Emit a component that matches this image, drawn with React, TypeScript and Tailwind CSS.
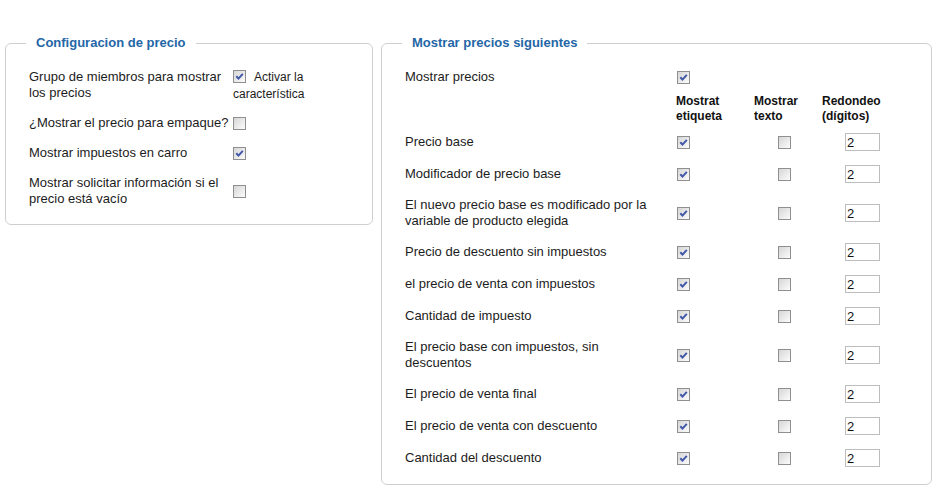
import React from "react";

const Box = ({ checked }: { checked?: boolean }) => (
  <span className="inline-flex w-[13px] h-[13px] shrink-0 items-center justify-center border border-[#8f8f8f] bg-linear-to-br from-[#d6d6d6] to-[#fcfcfc] align-top">
    {checked && (
      <svg width="11" height="11" viewBox="0 0 11 11">
        <path d="M2.3 5.2 L4.5 7.6 L8.8 2.8" fill="none" stroke="#4157a8" strokeWidth="2" />
      </svg>
    )}
  </span>
);

const Num = () => (
  <input
    readOnly
    value="2"
    className="w-[35px] h-[18px] border border-[#bdbdbd] bg-white pl-[1px] text-[13px] leading-[16px] text-[#111] outline-none"
  />
);

const leftRows: { label: string; checked: boolean; extra?: boolean }[] = [
  { label: "Grupo de miembros para mostrar los precios", checked: true, extra: true },
  { label: "¿Mostrar el precio para empaque?", checked: false },
  { label: "Mostrar impuestos en carro", checked: true },
  { label: "Mostrar solicitar información si el precio está vacío", checked: false },
];

const rightRows = [
  "Precio base",
  "Modificador de precio base",
  "El nuevo precio base es modificado por la variable de producto elegida",
  "Precio de descuento sin impuestos",
  "el precio de venta con impuestos",
  "Cantidad de impuesto",
  "El precio base con impuestos, sin descuentos",
  "El precio de venta final",
  "El precio de venta con descuento",
  "Cantidad del descuento",
];

export default function App() {
  return (
    <div className="w-[937px] h-[494px] bg-white font-['Liberation_Sans',Arial,sans-serif] text-[13px] leading-[16px] text-[#1c1c1c]">
      <div className="flex items-start gap-[8px] px-[5px] pt-[35px]">
        <fieldset className="w-[368px] rounded-[6px] border border-[#cfcfcf] p-0">
          <legend className="ml-[20px] px-[10px] text-[13px] font-bold leading-[16px] text-[#2466a6]">
            Configuracion de precio
          </legend>
          <div className="px-[23px] pt-[11px] pb-[10px]">
            {leftRows.map((r) =>
              r.extra ? (
                <div key={r.label} className="grid grid-cols-[204px_1fr] items-start py-[7px]">
                  <div className="pr-[4px]">{r.label}</div>
                  <div className="h-[32px] w-[80px] text-[12px] leading-[17px]">
                    <span className="mt-[1px] mr-[8px] inline-flex align-top">
                      <Box checked />
                    </span>
                    Activar la característica
                  </div>
                </div>
              ) : (
                <div key={r.label} className="grid grid-cols-[204px_1fr] items-center py-[7px]">
                  <div className="pr-[3px]">{r.label}</div>
                  <div className="flex">
                    <Box checked={r.checked} />
                  </div>
                </div>
              )
            )}
          </div>
        </fieldset>

        <fieldset className="w-[551px] rounded-[6px] border border-[#cfcfcf] p-0">
          <legend className="ml-[20px] px-[10px] text-[13px] font-bold leading-[16px] text-[#2466a6]">
            Mostrar precios siguientes
          </legend>
          <div className="px-[23px] pt-[11px] pb-[10px]">
            <div className="grid grid-cols-[271px_78px_68px_81px] items-center py-[7px]">
              <div>Mostrar precios</div>
              <div className="flex pl-[1px]">
                <Box checked />
              </div>
              <div />
              <div />
            </div>
            <div className="grid h-[34px] grid-cols-[271px_78px_68px_81px] items-center text-[12px] font-bold leading-[15px] text-[#111]">
              <div />
              <div>Mostrat etiqueta</div>
              <div>Mostrar texto</div>
              <div>Redondeo (dígitos)</div>
            </div>
            {rightRows.map((label) => (
              <div key={label} className="grid grid-cols-[271px_78px_68px_81px] items-center py-[7px]">
                <div className="max-w-[247px]">{label}</div>
                <div className="flex pl-[1px]">
                  <Box checked />
                </div>
                <div className="flex pl-[24px]">
                  <Box />
                </div>
                <div className="flex pl-[23px]">
                  <Num />
                </div>
              </div>
            ))}
          </div>
        </fieldset>
      </div>
    </div>
  );
}
